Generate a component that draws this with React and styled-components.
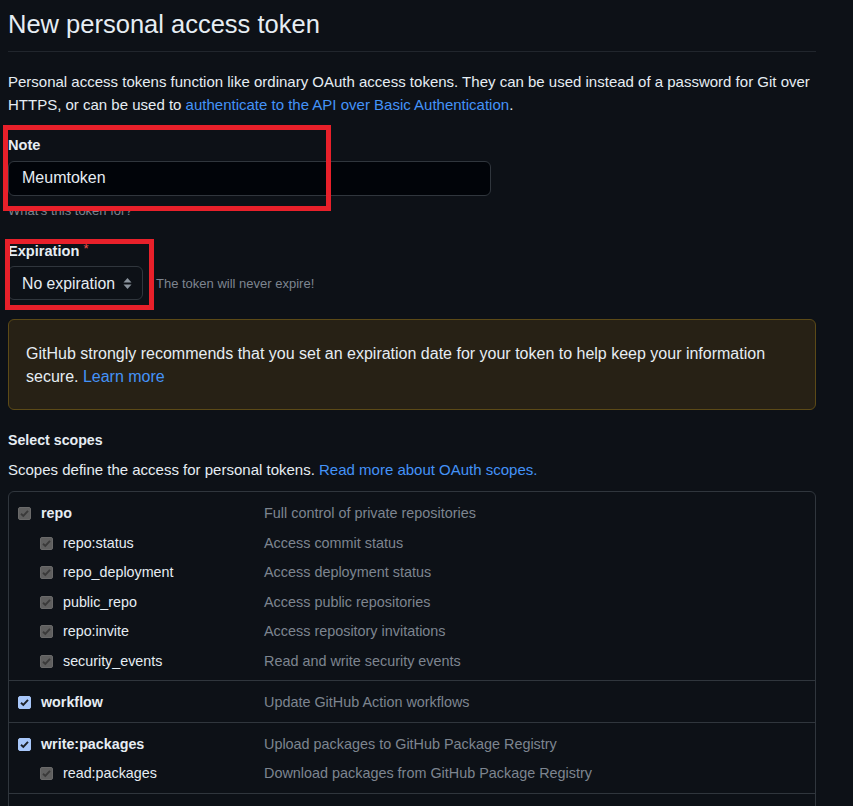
import React from "react";
import styled, { createGlobalStyle } from "styled-components";

const FONT = `"Liberation Sans", Arial, sans-serif`;

const GlobalStyle = createGlobalStyle`
	html, body {
		margin: 0;
		padding: 0;
		overflow: hidden;
		background: #0d1117;
	}
	body {
		font-family: ${FONT};
		color: #e6edf3;
	}
`;

const scopeGroups = [
	{
		name: "repo",
		desc: "Full control of private repositories",
		active: false,
		children: [
			{ name: "repo:status", desc: "Access commit status" },
			{ name: "repo_deployment", desc: "Access deployment status" },
			{ name: "public_repo", desc: "Access public repositories" },
			{ name: "repo:invite", desc: "Access repository invitations" },
			{ name: "security_events", desc: "Read and write security events" },
		],
	},
	{ name: "workflow", desc: "Update GitHub Action workflows", active: true, children: [] },
	{
		name: "write:packages",
		desc: "Upload packages to GitHub Package Registry",
		active: true,
		children: [{ name: "read:packages", desc: "Download packages from GitHub Package Registry" }],
	},
	{ name: "delete:packages", desc: "Delete packages from GitHub Package Registry", active: true, children: [] },
];

export default function App() {
	return (
		<>
			<GlobalStyle />
			<Page>
				<Header>
					<Title>New personal access token</Title>
				</Header>
				<Intro>
					Personal access tokens function like ordinary OAuth access tokens. They can be used instead of a password for Git over
					HTTPS, or can be used to <Link>authenticate to the API over Basic Authentication</Link>.
				</Intro>

				<FormGroup>
					<Highlight style={{ top: -8.5, left: -5, width: 328, height: 86 }} />
					<Label>Note</Label>
					<TextInput readOnly value="Meumtoken" />
					<Hint>What's this token for?</Hint>
				</FormGroup>

				<FormGroup $top={16}>
					<Highlight style={{ top: 2, left: -3, width: 149, height: 71 }} />
					<Label $gap={3.5}>
						Expiration <Required>*</Required>
					</Label>
					<SelectRow>
						<Select>
							No expiration
							<svg width="9" height="13" viewBox="0 0 9 13">
								<path d="M4.5 1 L8.5 5.5 H0.5 Z" fill="#8b949e" />
								<path d="M4.5 12 L8.5 7.5 H0.5 Z" fill="#8b949e" />
							</svg>
						</Select>
						<InlineNote>The token will never expire!</InlineNote>
					</SelectRow>
				</FormGroup>

				<Flash>
					GitHub strongly recommends that you set an expiration date for your token to help keep your information secure.{" "}
					<Link>Learn more</Link>
				</Flash>

				<SectionTitle>Select scopes</SectionTitle>
				<SectionText>
					Scopes define the access for personal tokens. <Link>Read more about OAuth scopes.</Link>
				</SectionText>

				<ScopeTable>
					{scopeGroups.map((group) => (
						<ScopeGroup key={group.name}>
							<ScopeRow>
								<ScopeName>
									<Checkbox $active={group.active} />
									<strong>{group.name}</strong>
								</ScopeName>
								<ScopeDesc>{group.desc}</ScopeDesc>
							</ScopeRow>
							{group.children.map((child) => (
								<ScopeRow key={child.name}>
									<ScopeName $nested>
										<Checkbox />
										{child.name}
									</ScopeName>
									<ScopeDesc>{child.desc}</ScopeDesc>
								</ScopeRow>
							))}
						</ScopeGroup>
					))}
				</ScopeTable>
			</Page>
		</>
	);
}

function Checkbox({ $active }) {
	return (
		<Box $active={$active}>
			<svg width="11" height="11" viewBox="0 0 11 11">
				<path d="M2 5.8 L4.3 8 L9 2.8" fill="none" stroke={$active ? "#1c2128" : "#3a3a3a"} strokeWidth="1.9" />
			</svg>
		</Box>
	);
}

const Page = styled.div`
	width: 808px;
	padding: 0 0 0 8px;
	font-size: 15px;
	line-height: 23px;
`;

const Header = styled.div`
	padding: 5px 0 8px;
	border-bottom: 1px solid #21262d;
`;

const Title = styled.h1`
	margin: 0;
	font-size: 25.5px;
	font-weight: 400;
	line-height: 38px;
	color: #e6edf3;
`;

const Intro = styled.p`
	margin: 18px 0 0;
`;

const Link = styled.a`
	color: #4493f8;
	cursor: pointer;
`;

const FormGroup = styled.div`
	position: relative;
	margin-top: ${({ $top = 17.5 }) => $top}px;
`;

const Highlight = styled.div`
	position: absolute;
	box-sizing: border-box;
	border: 5px solid #e8202a;
	pointer-events: none;
	z-index: 2;
`;

const Label = styled.div`
	font-weight: 700;
	font-size: 14.6px;
	line-height: 23px;
	margin-bottom: ${({ $gap = 4 }) => $gap}px;
`;

const Required = styled.span`
	color: #f85149;
	font-weight: 400;
	font-size: 13px;
	vertical-align: 3px;
`;

const TextInput = styled.input`
	display: block;
	box-sizing: border-box;
	width: 483px;
	height: 35px;
	padding: 0 13px;
	background: #010409;
	border: 1px solid #30363d;
	border-radius: 6px;
	color: #e6edf3;
	font-family: ${FONT};
	font-size: 16px;
	outline: none;
`;

const Hint = styled.div`
	margin-top: 5px;
	font-size: 13px;
	line-height: 20px;
	color: #7d8590;
`;

const SelectRow = styled.div`
	display: flex;
	align-items: center;
	gap: 13px;
`;

const Select = styled.div`
	box-sizing: border-box;
	width: 135px;
	height: 34px;
	display: flex;
	align-items: center;
	justify-content: space-between;
	padding: 0 10px 0 13px;
	background: #0d1117;
	border: 1px solid #30363d;
	border-radius: 6px;
	font-size: 15.8px;
`;

const InlineNote = styled.span`
	font-size: 13px;
	color: #7d8590;
`;

const Flash = styled.div`
	box-sizing: border-box;
	margin-top: 19px;
	height: 91px;
	padding: 22px 17px 20px;
	background: #272115;
	border: 1px solid #5c4a17;
	border-radius: 6px;
	font-size: 16px;
	line-height: 23px;
`;

const SectionTitle = styled.div`
	margin-top: 19px;
	font-weight: 700;
	font-size: 14.2px;
`;

const SectionText = styled.div`
	margin-top: 6px;
`;

const ScopeTable = styled.div`
	margin-top: 10px;
	border: 1px solid #30363d;
	border-radius: 6px;
`;

const ScopeGroup = styled.div`
	padding: 7px 0 4px;
	& + & {
		border-top: 1px solid #30363d;
	}
`;

const ScopeRow = styled.div`
	display: grid;
	grid-template-columns: 255px 1fr;
	align-items: center;
	height: 29.5px;
`;

const ScopeName = styled.div`
	display: flex;
	align-items: center;
	gap: 10px;
	padding-left: ${({ $nested }) => ($nested ? "31px" : "9px")};
	font-size: 14.3px;
	color: #e6edf3;
	strong {
		font-weight: 700;
	}
`;

const ScopeDesc = styled.div`
	font-size: 14.4px;
	color: #7d8590;
`;

const Box = styled.span`
	display: inline-flex;
	align-items: center;
	justify-content: center;
	width: 13px;
	height: 13px;
	border-radius: 2px;
	background: ${({ $active }) => ($active ? "#a8c7fa" : "#5f5f5f")};
	border: 1px solid ${({ $active }) => ($active ? "#a8c7fa" : "#6a6a6a")};
	box-sizing: border-box;
	flex: none;
`;
